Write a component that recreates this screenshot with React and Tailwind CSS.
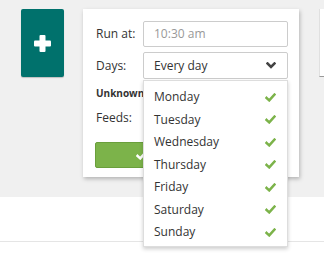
import React from "react";

const Check = ({ className, color = "#7cb34a" }) => (
  <svg viewBox="0 0 12 10" className={className} fill="none">
    <path d="M1.6 5.4 L4.6 8.2 L10.4 1.8" stroke={color} strokeWidth="2.8" strokeLinecap="square" strokeLinejoin="miter" />
  </svg>
);

const Chevron = () => (
  <svg viewBox="0 0 10 7" className="w-[10px] h-[7px]" fill="none">
    <path d="M1.5 1.5 L5 5 L8.5 1.5" stroke="#444" strokeWidth="2.6" strokeLinecap="square" />
  </svg>
);

const days = ["Monday", "Tuesday", "Wednesday", "Thursday", "Friday", "Saturday", "Sunday"];

export default function App() {
  return (
    <div className="relative w-[324px] h-[255px] overflow-hidden bg-white text-[12px] text-[#333]" style={{ fontFamily: '"Open Sans", sans-serif' }}>
      <div className="h-[197px] bg-[#f0f0f0] flex items-start pt-[9px] pl-[21px]">
        <div className="shrink-0 w-[43px] h-[68px] bg-[#00716c] rounded-[2px] flex items-center justify-center shadow-[0_1px_1px_rgba(0,0,0,0.2)]">
          <svg viewBox="0 0 17 17" className="w-[17px] h-[17px]">
            <rect x="5.5" y="0" width="6" height="17" rx="1" fill="#fff" />
            <rect x="0" y="5.5" width="17" height="6" rx="1" fill="#fff" />
          </svg>
        </div>
        <div className="shrink-0 ml-[19px] w-[216px] h-[168px] bg-white shadow-[1px_2px_4px_rgba(0,0,0,0.25)] pl-[13px] pr-[11px] pt-[12px] flex flex-col">
          <div className="flex items-center h-[26px]">
            <span className="w-[47px]">Run at:</span>
            <div className="flex-1 h-[26px] border border-[#ccc] rounded-[2px] flex items-center px-[10px] text-[#999]">10:30 am</div>
          </div>
          <div className="flex items-center h-[27px] mt-[5px]">
            <span className="w-[47px]">Days:</span>
            <div className="flex-1 h-[27px] border border-[#ccc] rounded-[2px] flex items-center justify-between pl-[10px] pr-[11px]">
              <span>Every day</span>
              <Chevron />
            </div>
          </div>
          <div className="mt-[4px] h-[20px] flex items-center text-[10px] font-bold">Unknown</div>
          <div className="mt-[5px] h-[20px] flex items-center">Feeds:</div>
          <div className="mt-[14px] -ml-[1px] w-[193px] h-[26px] bg-[#7cb34a] border border-[#6a9f3c] rounded-[2px] flex items-center pl-[40px]">
            <Check className="w-[11px] h-[9px]" color="#fff" />
          </div>
        </div>
        <div className="shrink-0 ml-[20px] w-[40px] h-[68px] bg-white border-l border-l-[#e0e0e0] border-b border-b-[#999]"></div>
      </div>
      <div className="h-[45px] border-b border-[#e5e5e5]"></div>

      <div className="absolute left-[143px] top-[80px] w-[145px] h-[167px] bg-white border border-[#ddd] shadow-[0_2px_4px_rgba(0,0,0,0.2)] pt-[5px]">
        {days.map((d) => (
          <div key={d} className="h-[22.5px] flex items-center justify-between pl-[10px] pr-[11px]">
            <span>{d}</span>
            <Check className="w-[11px] h-[9px]" />
          </div>
        ))}
      </div>
    </div>
  );
}
